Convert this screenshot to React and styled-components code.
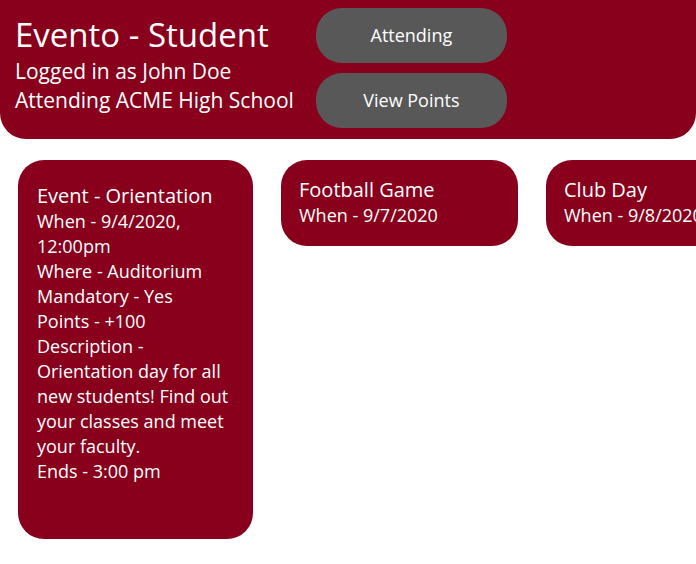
import React from "react";
import styled, { createGlobalStyle } from "styled-components";

const GlobalStyle = createGlobalStyle`
  *, *::before, *::after { box-sizing: border-box; }
  html { background: #fff; }
  body {
    margin: 0;
    color: #fff;
    font-family: "Segoe UI", "Open Sans", sans-serif;
    font-size: 18px;
    line-height: 25px;
  }
`;

const Header = styled.header`
  display: flex;
  align-items: flex-start;
  gap: 22px;
  padding: 8px 16px 11px 15px;
  background: #88001b;
  border-radius: 0 0 26px 26px;
`;

const Identity = styled.div`
  flex: none;
  padding-top: 4px;
  white-space: nowrap;
`;

const Title = styled.h1`
  margin: 0;
  font-size: 33px;
  line-height: 45px;
  font-weight: 400;
`;

const Status = styled.p`
  margin: 0;
  font-size: 21px;
  line-height: 29px;
`;

const Actions = styled.nav`
  display: flex;
  flex-direction: column;
  gap: 10px;
`;

const ActionButton = styled.button`
  width: 191px;
  height: 55px;
  padding: 0;
  border: 0;
  border-radius: 26px;
  background: #585858;
  color: inherit;
  font: inherit;
  cursor: pointer;
`;

const EventRow = styled.main`
  display: flex;
  align-items: flex-start;
  gap: 28px;
  padding: 21px 18px;
  overflow-x: auto;
  scrollbar-width: none;
`;

const EventCard = styled.article`
  flex: none;
  width: ${({ $expanded }) => ($expanded ? "235px" : "237px")};
  padding: ${({ $expanded }) => ($expanded ? "22px 19px 55px" : "16px 18px 18px")};
  border-radius: 26px;
  background: #88001b;
`;

const EventTitle = styled.h2`
  margin: 0;
  font-size: 20px;
  line-height: 27px;
  font-weight: 400;
`;

const Detail = styled.p`
  margin: 0;
`;

const events = [
  {
    title: "Event - Orientation",
    expanded: true,
    details: [
      "When - 9/4/2020, 12:00pm",
      "Where - Auditorium",
      "Mandatory - Yes",
      "Points - +100",
      "Description - Orientation day for all new students! Find out your classes and meet your faculty.",
      "Ends - 3:00 pm",
    ],
  },
  { title: "Football Game", details: ["When - 9/7/2020"] },
  { title: "Club Day", details: ["When - 9/8/2020"] },
];

export default function App() {
  return (
    <>
      <GlobalStyle />
      <Header>
        <Identity>
          <Title>Evento - Student</Title>
          <Status>Logged in as John Doe</Status>
          <Status>Attending ACME High School</Status>
        </Identity>
        <Actions>
          <ActionButton type="button">Attending</ActionButton>
          <ActionButton type="button">View Points</ActionButton>
        </Actions>
      </Header>
      <EventRow>
        {events.map((event) => (
          <EventCard key={event.title} $expanded={event.expanded}>
            <EventTitle>{event.title}</EventTitle>
            {event.details.map((detail) => (
              <Detail key={detail}>{detail}</Detail>
            ))}
          </EventCard>
        ))}
      </EventRow>
    </>
  );
}
